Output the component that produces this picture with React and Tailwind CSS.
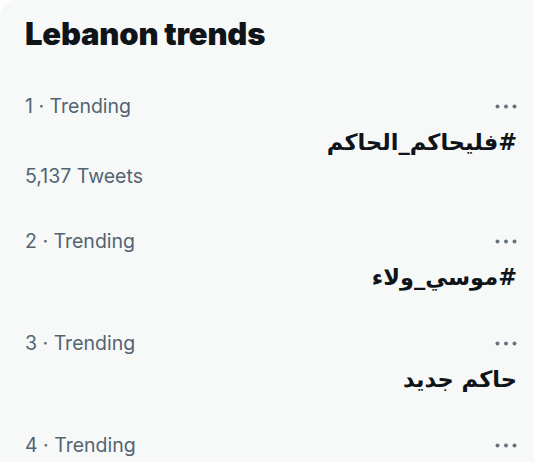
const trends = [
  { rank: 1, name: "#فليحاكم_الحاكم", tweets: "5,137 Tweets" },
  { rank: 2, name: "#موسي_ولاء" },
  { rank: 3, name: "حاكم جديد" },
  { rank: 4, name: "" },
];

const Dots = () => (
  <svg width="22" height="5" viewBox="0 0 22 5" className="fill-[#66737f]">
    <circle cx="2.5" cy="2.5" r="2" />
    <circle cx="11" cy="2.5" r="2" />
    <circle cx="19.5" cy="2.5" r="2" />
  </svg>
);

const TrendRow = ({ rank, name, tweets }) => (
  <div className="flex flex-col pr-[17px] pl-[25px] pb-[38px]">
    <div className="flex items-center justify-between">
      <span className="text-[19.5px] leading-[24px] text-[#536471]">{rank} · Trending</span>
      <Dots />
    </div>
    {name && (
      <p
        dir="rtl"
        className="mt-[8px] text-right text-[22.5px] leading-[32px] font-bold text-[#0f1419]"
        style={{ fontFamily: '"DejaVu Sans", "Noto Sans", sans-serif' }}
      >
        {name}
      </p>
    )}
    {tweets && (
      <span className="mt-[6px] mb-[3px] text-[19.5px] leading-[24px] text-[#536471]">{tweets}</span>
    )}
  </div>
);

const App = () => (
  <div className="h-[462px] w-[534px] overflow-hidden bg-white font-['Inter',sans-serif]">
    <div className="min-h-[462px] rounded-tl-2xl bg-[#f7f9f9] pt-[14px]">
      <h2 className="px-[25px] pb-[40px] text-[31px] leading-[40px] font-black tracking-[-0.2px] text-[#0f1419]">
        Lebanon trends
      </h2>
      {trends.map((t) => (
        <TrendRow key={t.rank} {...t} />
      ))}
    </div>
  </div>
);

export default App;
